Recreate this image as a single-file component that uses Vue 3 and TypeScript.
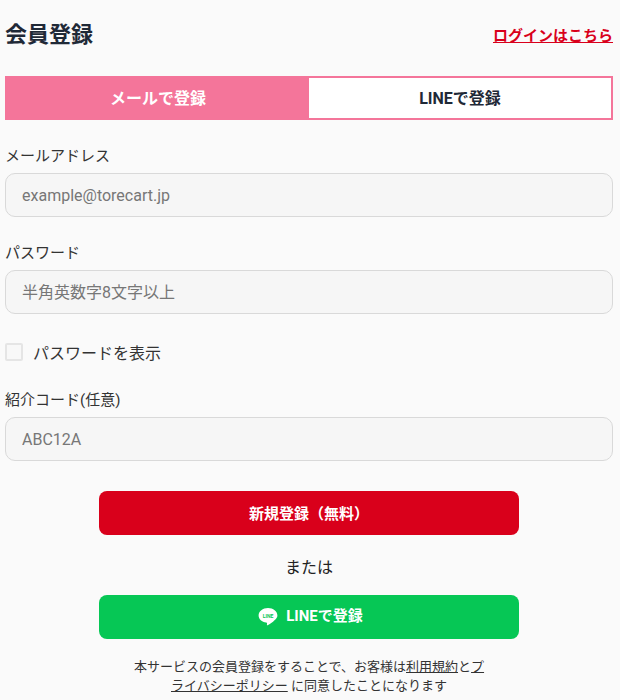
<script setup lang="ts">
const fields = [
  { id: 'email', label: 'メールアドレス', placeholder: 'example@torecart.jp' },
  { id: 'password', label: 'パスワード', placeholder: '半角英数字8文字以上' },
]
</script>

<template>
  <div class="page">
    <header class="head">
      <h1 class="title">会員登録</h1>
      <a class="login" href="#">ログインはこちら</a>
    </header>
    <div class="tabs">
      <button class="tab active" type="button">メールで登録</button>
      <button class="tab other" type="button">LINEで登録</button>
    </div>
    <div v-for="f in fields" :key="f.id" class="field">
      <label class="label" :for="f.id">{{ f.label }}</label>
      <input :id="f.id" class="input" type="text" :placeholder="f.placeholder" />
    </div>
    <label class="check">
      <input class="box" type="checkbox" />
      <span>パスワードを表示</span>
    </label>
    <div class="field code">
      <label class="label" for="code">紹介コード(任意)</label>
      <input id="code" class="input" type="text" placeholder="ABC12A" />
    </div>
    <div class="actions">
      <button class="btn red" type="button">新規登録（無料）</button>
      <p class="or">または</p>
      <button class="btn green" type="button">
        <svg class="line-icon" width="20" height="20" viewBox="0 0 20 20" aria-hidden="true">
          <path d="M10 1C4.800 1 .6 4.300.6 8.400c0 3.600 3.200 6.600 7.600 7.200.3.100.7.200.8.500.1.200.1.600 0 .8l-.1.800c0 .2-.2.900.8.500s5.200-3.100 7.100-5.300C18.500 11.500 19.400 10 19.400 8.400 19.400 4.300 15.200 1 10 1Z" fill="#fff" />
          <text x="10" y="10.600" text-anchor="middle" class="line-text">LINE</text>
        </svg>
        <span class="line-label">LINEで登録</span>
      </button>
      <p class="note">
        本サービスの会員登録をすることで、お客様は<a href="#">利用規約</a>と<a href="#">プ</a><br /><a href="#">ライバシーポリシー</a> に同意したことになります
      </p>
    </div>
  </div>
</template>

<style>
html, body { background: #fafafa; }
</style>

<style scoped>
.page {
  box-sizing: border-box;
  width: 620px;
  height: 700px;
  overflow: hidden;
  padding: 0 7px 0 5px;
  background: #fafafa;
  color: #1f2937;
  font-family: Roboto, "Noto Sans CJK JP", sans-serif;
}
.head {
  display: flex;
  justify-content: space-between;
  align-items: center;
  height: 76px;
  padding-bottom: 8px;
  box-sizing: border-box;
}
.title {
  margin: 0 0 4px;
  font-size: 22px;
  font-weight: 700;
  color: #1f2937;
}
.login {
  font-size: 15px;
  font-weight: 700;
  color: #d9001b;
}
.tabs {
  display: grid;
  grid-template-columns: 1fr 1fr;
  height: 44px;
}
.tab {
  border: 2px solid #f4759a;
  background: #fff;
  color: #1f2937;
  font: 700 16px Roboto, "Noto Sans CJK JP", sans-serif;
  padding: 0 0 3px;
}
.tab.other {
  border-left: none;
}
.tab.active {
  background: #f4759a;
  color: #fff;
  padding-left: 2px;
}
.field {
  margin-top: 24px;
}
.label {
  display: block;
  font-size: 15px;
  line-height: 24px;
  margin-bottom: 5px;
  color: #333;
}
.input {
  display: block;
  box-sizing: border-box;
  width: 100%;
  height: 44px;
  padding: 0 16px;
  border: 1px solid #d9d9d9;
  border-radius: 10px;
  background: #f6f6f6;
  font: 16px Roboto, "Noto Sans CJK JP", sans-serif;
  outline: none;
}
.input::placeholder {
  color: #777;
  opacity: 1;
}
.check {
  display: flex;
  align-items: center;
  gap: 10px;
  margin-top: 26px;
  height: 24px;
  font-size: 16px;
  color: #333;
}
.box {
  appearance: none;
  width: 18px;
  height: 18px;
  margin: 0;
  border: 2px solid #e5e5e5;
  border-radius: 2px;
  background: #f8f8f8;
}
.code {
  margin-top: 24px;
}
.actions {
  display: flex;
  flex-direction: column;
  align-items: center;
  margin-top: 30px;
}
.btn {
  display: flex;
  align-items: center;
  justify-content: center;
  gap: 8px;
  width: 420px;
  height: 44px;
  padding: 0;
  border: none;
  border-radius: 8px;
  color: #fff;
  font: 700 15px Roboto, "Noto Sans CJK JP", sans-serif;
}
.red { background: #d9001b; padding-bottom: 2px; }
.green { background: #06c755; padding-left: 3px; }
.line-label { margin-bottom: 5px; }
.or {
  margin: 0;
  height: 60px;
  line-height: 65px;
  font-size: 16px;
  color: #222;
}
.line-text {
  font: 700 5px Roboto, sans-serif;
  fill: #06c755;
}
.note {
  width: 380px;
  margin: 18px 0 0;
  font-size: 13px;
  line-height: 19px;
  text-align: center;
  color: #333;
}
.note a { color: #333; }
</style>
